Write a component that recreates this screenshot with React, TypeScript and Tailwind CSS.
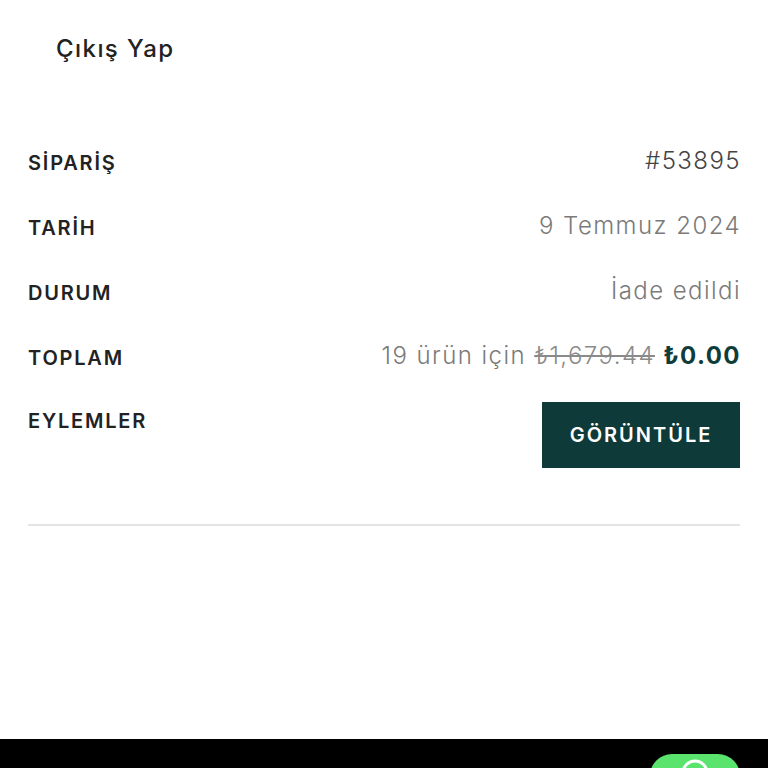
import React from 'react';

type Row = { label: string; value: React.ReactNode };

const rows: Row[] = [
  { label: 'SİPARİŞ', value: <span className="text-[#444444]">#53895</span> },
  { label: 'TARİH', value: <span className="text-[#7a7a7a]">9 Temmuz 2024</span> },
  { label: 'DURUM', value: <span className="text-[#7a7a7a]">İade edildi</span> },
  {
    label: 'TOPLAM',
    value: (
      <span className="text-[#7a7a7a]">
        19 ürün için <del className="text-[#8a8a8a]">₺1,679.44</del>{' '}
        <span className="font-bold text-[#0f3d3a]">₺0.00</span>
      </span>
    ),
  },
];

export default function App() {
  return (
    <div
      className="w-[768px] h-[768px] bg-white flex flex-col overflow-hidden"
      style={{ fontFamily: 'Inter, "Open Sans", sans-serif' }}
    >
      <div className="flex-1 px-7">
        {/* account nav */}
        <div className="pl-7 pt-[31px] h-[128px]">
          <a className="text-[24px] leading-[36px] font-medium tracking-[0.06em] text-[#222222]">Çıkış Yap</a>
        </div>

        {/* order table */}
        <div className="flex flex-col">
          {rows.map((row) => (
            <div key={row.label} className="h-[65px] flex items-center justify-between">
              <span className="text-[20px] leading-[28px] font-semibold tracking-[0.09em] text-[#222222] mt-1">
                {row.label}
              </span>
              <span className="text-[24px] leading-[32px] font-light tracking-[0.06em] -mr-[1px]">{row.value}</span>
            </div>
          ))}

          <div className="flex items-start justify-between">
            <span className="text-[20px] leading-[28px] font-semibold tracking-[0.09em] text-[#222222] mt-[19px]">
              EYLEMLER
            </span>
            <button className="mt-[14px] w-[198px] h-[66px] bg-[#0e3b39] text-white text-[20px] font-semibold tracking-[0.1em]">
              GÖRÜNTÜLE
            </button>
          </div>
        </div>

        <div className="mt-[56px] border-t-2 border-[#e4e4e4]" />
      </div>

      {/* footer */}
      <div className="h-[29px] bg-black shrink-0 flex justify-end pr-7 overflow-hidden">
        <div className="mt-[15px] w-[90px] h-[44px] rounded-[22px] bg-[#5ae46e] flex justify-center pt-[4px]">
          <svg width="30" height="30" viewBox="0 0 30 30" fill="none">
            <circle cx="15" cy="15" r="12" stroke="white" strokeWidth="3" />
          </svg>
        </div>
      </div>
    </div>
  );
}
